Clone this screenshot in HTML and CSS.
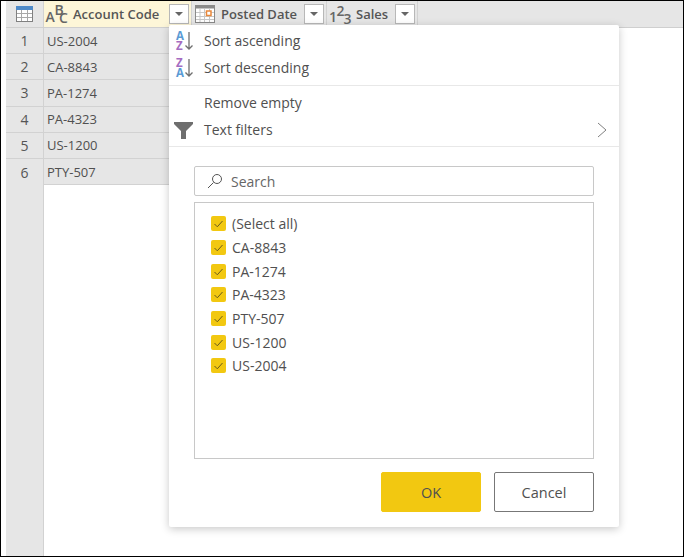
FILE: index.html
```html
<!DOCTYPE html>
<html lang="en">
<head>
    <meta charset="UTF-8">
    <title>Filter menu</title>
    <link rel="stylesheet" href="styles.css">
</head>
<body>
    <div class="frame">
        <div class="head">
            <div class="corner">
                <svg width="17" height="16" viewBox="0 0 17 16"><rect x="0.500" y="0.500" width="16" height="15" fill="#fff" stroke="#808080"/><rect x="0" y="0" width="17" height="4" fill="#4f8ac9"/><path d="M1 7.500h15M1 11.500h15M5.500 4v11M11.500 4v11" stroke="#a8a8a8" fill="none"/></svg>
            </div>
            <div class="col col-active">
                <svg class="type type-abc" width="24" height="20" viewBox="0 0 24 20"><text x="0.500" y="17.500" class="t-a">A</text><text x="9.500" y="10.500" class="t-b">B</text><text x="14" y="18.500" class="t-c">C</text></svg>
                <span class="col-name name-abc">Account Code</span>
                <span class="drop"><i></i></span>
            </div>
            <div class="col col-date">
                <svg class="type type-date" width="20" height="18" viewBox="0 0 20 18"><rect x="0.500" y="0.500" width="19" height="17" fill="#fff" stroke="#8a8a8a"/><rect x="0.500" y="0.500" width="19" height="3" fill="#8a8a8a"/><path d="M5 4v13M9.500 4v13M14.500 4v13M1 7.500h18M1 11.500h18M1 14.500h18" stroke="#c8c8c8"/><rect x="11.500" y="6" width="4.500" height="4.500" fill="#fff" stroke="#e8873a" stroke-width="1.500"/></svg>
                <span class="col-name name-date">Posted Date</span>
                <span class="drop"><i></i></span>
            </div>
            <div class="col col-num">
                <svg class="type type-num" width="21" height="20" viewBox="0 0 21 20"><text x="-1" y="17.500" class="t-n">1</text><text x="6.500" y="11.500" class="t-n">2</text><text x="13.500" y="19.500" class="t-n">3</text></svg>
                <span class="col-name name-num">Sales</span>
                <span class="drop"><i></i></span>
            </div>
        </div>
        <div class="body">
            <div class="nums">
                <div class="num">1</div>
                <div class="num">2</div>
                <div class="num">3</div>
                <div class="num">4</div>
                <div class="num">5</div>
                <div class="num">6</div>
            </div>
            <div class="rows">
                <div class="cell">US-2004</div>
                <div class="cell">CA-8843</div>
                <div class="cell">PA-1274</div>
                <div class="cell">PA-4323</div>
                <div class="cell">US-1200</div>
                <div class="cell">PTY-507</div>
            </div>
        </div>

        <div class="menu">
            <div class="menu-group sort-group">
                <div class="item">
                    <svg class="sort-icon" width="22" height="22" viewBox="0 0 22 22"><text x="3" y="10" class="az-blue">A</text><text x="3" y="20" class="az-purple">Z</text><path d="M16 2v17M12.500 15.500l3.500 3.500 3.500-3.500" stroke="#6f6f6f" fill="none" stroke-width="1.300"/></svg>
                    <span>Sort ascending</span>
                </div>
                <div class="item">
                    <svg class="sort-icon" width="22" height="22" viewBox="0 0 22 22"><text x="3" y="10" class="az-purple">Z</text><text x="3" y="20" class="az-blue">A</text><path d="M16 2v17M12.500 15.500l3.500 3.500 3.500-3.500" stroke="#6f6f6f" fill="none" stroke-width="1.300"/></svg>
                    <span>Sort descending</span>
                </div>
            </div>
            <div class="menu-group filter-group">
                <div class="item">
                    <span class="no-icon"></span>
                    <span>Remove empty</span>
                </div>
                <div class="item">
                    <svg class="sort-icon" width="22" height="22" viewBox="0 0 22 22"><path d="M1 3h19v2l-7 7v8h-5v-8l-7-7z" fill="#6e6e6e"/></svg>
                    <span>Text filters</span>
                    <svg class="chevron" width="10" height="16" viewBox="0 0 10 16"><path d="M1 1l8 7-8 7" stroke="#808080" fill="none"/></svg>
                </div>
            </div>
            <div class="menu-search">
                <div class="search">
                    <svg width="16" height="16" viewBox="0 0 16 16"><circle cx="10" cy="6" r="4.500" stroke="#555" fill="none"/><path d="M6.500 9.500L1 15" stroke="#555" fill="none"/></svg>
                    <span>Search</span>
                </div>
                <div class="list">
                    <label class="check"><span class="box"><svg width="15" height="15" viewBox="0 0 15 15"><path d="M3.500 8l2.800 2.800L11.500 5" stroke="#6b5c1a" fill="none"/></svg></span>(Select all)</label>
                    <label class="check"><span class="box"><svg width="15" height="15" viewBox="0 0 15 15"><path d="M3.500 8l2.800 2.800L11.500 5" stroke="#6b5c1a" fill="none"/></svg></span>CA-8843</label>
                    <label class="check"><span class="box"><svg width="15" height="15" viewBox="0 0 15 15"><path d="M3.500 8l2.800 2.800L11.500 5" stroke="#6b5c1a" fill="none"/></svg></span>PA-1274</label>
                    <label class="check"><span class="box"><svg width="15" height="15" viewBox="0 0 15 15"><path d="M3.500 8l2.800 2.800L11.500 5" stroke="#6b5c1a" fill="none"/></svg></span>PA-4323</label>
                    <label class="check"><span class="box"><svg width="15" height="15" viewBox="0 0 15 15"><path d="M3.500 8l2.800 2.800L11.500 5" stroke="#6b5c1a" fill="none"/></svg></span>PTY-507</label>
                    <label class="check"><span class="box"><svg width="15" height="15" viewBox="0 0 15 15"><path d="M3.500 8l2.800 2.800L11.500 5" stroke="#6b5c1a" fill="none"/></svg></span>US-1200</label>
                    <label class="check"><span class="box"><svg width="15" height="15" viewBox="0 0 15 15"><path d="M3.500 8l2.800 2.800L11.500 5" stroke="#6b5c1a" fill="none"/></svg></span>US-2004</label>
                </div>
                <div class="actions">
                    <button class="btn btn-ok">OK</button>
                    <button class="btn">Cancel</button>
                </div>
            </div>
        </div>
    </div>
</body>
</html>
```

FILE: styles.css
```css
/* Page frame */
html, body {
    height: 100%;
}
body {
    margin: 0;
    background-color: #fff;
    font-family: "Open Sans", "Noto Sans", sans-serif;
    font-size: 14px;
    color: #505050;
}
.frame {
    position: relative;
    box-sizing: border-box;
    height: 557px;
    padding-left: 5px;
    border: 1px solid #000;
    display: flex;
    flex-direction: column;
    overflow: hidden;
}

/* Column header */
.head {
    display: flex;
    height: 27px;
    flex: none;
    box-sizing: border-box;
    background-color: #e6e6e6;
    border-bottom: 1px solid #cfcfcf;
}
.corner {
    box-sizing: border-box;
    width: 38px;
    flex: none;
    display: flex;
    align-items: center;
    justify-content: center;
    border-right: 1px solid #d2d2d2;
}
.col {
    box-sizing: border-box;
    display: flex;
    align-items: center;
    flex: none;
    border-right: 1px solid #d2d2d2;
    font-size: 13px;
    font-weight: 600;
    color: #555;
}
.col-active {
    width: 148px;
    background-color: #fdf6d8;
}
.col-date {
    width: 135px;
}
.col-num {
    width: 91px;
}
.type {
    flex: none;
    overflow: visible;
}
.type-abc {
    margin-left: 1px;
}
.type-date {
    margin-left: 3px;
}
.type-num {
    margin-left: 3px;
}
.col-name {
    flex: 1;
    white-space: nowrap;
}
.name-abc {
    margin-left: 4px;
}
.name-date {
    margin-left: 6px;
}
.name-num {
    margin-left: 5px;
}
.drop {
    flex: none;
    box-sizing: border-box;
    width: 20px;
    height: 20px;
    margin-right: 2px;
    background-color: #fff;
    border: 1px solid #b8b8b8;
    display: flex;
    align-items: center;
    justify-content: center;
}
.drop i {
    width: 0;
    height: 0;
    border-left: 4px solid transparent;
    border-right: 4px solid transparent;
    border-top: 4px solid #666;
}
.t-a, .t-b, .t-c, .t-n {
    font-family: "Open Sans", sans-serif;
    font-size: 14px;
    font-weight: 600;
    fill: #666;
}

/* Row numbers and cells */
.body {
    flex: 1;
    display: flex;
    min-height: 0;
}
.nums {
    box-sizing: border-box;
    width: 38px;
    flex: none;
    background-color: #e6e6e6;
    border-right: 1px solid #d2d2d2;
}
.num {
    box-sizing: border-box;
    height: 26.200px;
    border-bottom: 1px solid #d2d2d2;
    display: flex;
    align-items: center;
    justify-content: center;
    font-size: 14px;
    color: #555;
}
.nums .num:last-child {
    border-bottom: 0;
}
.rows {
    flex: 1;
}
.cell {
    box-sizing: border-box;
    width: 130px;
    height: 26.200px;
    padding-left: 3px;
    display: flex;
    align-items: center;
    background-color: #e6e6e6;
    border-bottom: 1px solid #d2d2d2;
    font-size: 13px;
}

/* Filter menu */
.menu {
    position: absolute;
    left: 168px;
    top: 24px;
    width: 450px;
    height: 502px;
    background-color: #fff;
    border-radius: 2px;
    box-shadow: 0 2px 8px rgba(0,0,0,0.22);
    display: flex;
    flex-direction: column;
}
.menu-group {
    flex: none;
    box-sizing: border-box;
    border-bottom: 1px solid #e8e8e8;
}
.sort-group {
    padding-top: 2px;
    height: 61px;
}
.filter-group {
    padding-top: 3px;
    height: 61px;
}
.item {
    display: flex;
    align-items: center;
    height: 27px;
    padding-left: 4px;
    font-size: 14px;
}
.sort-icon, .no-icon {
    flex: none;
    width: 22px;
    height: 22px;
    margin-right: 9px;
    overflow: visible;
}
.az-blue, .az-purple {
    font-family: "Open Sans", sans-serif;
    font-size: 11.500px;
    font-weight: 700;
}
.az-blue {
    fill: #5b9bd5;
}
.az-purple {
    fill: #a56cc1;
}
.chevron {
    margin-left: auto;
    margin-right: 12px;
}
.menu-search {
    flex: 1;
    padding: 19px 25px 0;
    display: flex;
    flex-direction: column;
}
.search {
    box-sizing: border-box;
    height: 30px;
    flex: none;
    border: 1px solid #c8c8c8;
    border-radius: 2px;
    display: flex;
    align-items: center;
    gap: 8px;
    padding-left: 12px;
    color: #666;
}
.list {
    box-sizing: border-box;
    height: 257px;
    flex: none;
    margin-top: 6px;
    padding-top: 9px;
    border: 1px solid #c8c8c8;
}
.check {
    display: flex;
    align-items: center;
    height: 23.670px;
    padding-left: 16px;
    font-size: 14px;
}
.box {
    flex: none;
    width: 15px;
    height: 15px;
    margin-right: 6px;
    background-color: #f2c811;
    border-radius: 2px;
}
.box svg {
    display: block;
}
.actions {
    display: flex;
    justify-content: flex-end;
    gap: 13px;
    margin-top: 13px;
}
.btn {
    box-sizing: border-box;
    width: 100px;
    height: 40px;
    background-color: #fff;
    border: 1px solid #777;
    border-radius: 2px;
    font-family: inherit;
    font-size: 14.500px;
    color: #505050;
}
.btn-ok {
    background-color: #f2c811;
    border-color: #f2c811;
}
```
